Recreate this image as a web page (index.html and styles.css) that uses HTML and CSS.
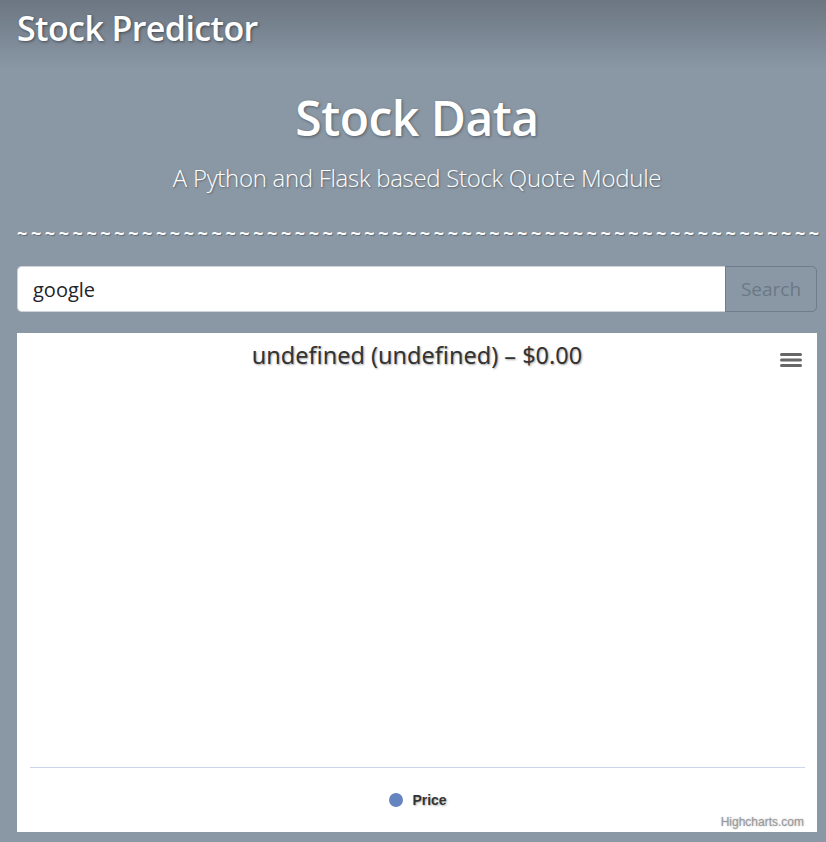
FILE: index.html
```html
<!DOCTYPE html>
<html>
<head>
<meta charset="utf-8">
<link rel="stylesheet" href="styles.css">
</head>
<body>
<div class="page">
  <header class="topbar">
    <span class="brand">Stock Predictor</span>
  </header>
  <section class="hero">
    <h1 class="hero-title">Stock Data</h1>
    <p class="hero-lead">A Python and Flask based Stock Quote Module</p>
  </section>
  <div class="tildes">~~~~~~~~~~~~~~~~~~~~~~~~~~~~~~~~~~~~~~~~~~~~~~~~~~~~~~~~~~</div>
  <form class="search">
    <input class="search-input" type="text" value="google">
    <button class="search-btn" type="button">Search</button>
  </form>
  <div class="chart">
    <div class="chart-head">
      <div class="chart-title">undefined (undefined) – $0.00</div>
      <svg class="chart-menu" width="22" height="18" viewBox="0 0 22 18">
        <rect x="0" y="2" width="22" height="3" rx="1.5" fill="#666"/>
        <rect x="0" y="7.5" width="22" height="3" rx="1.5" fill="#666"/>
        <rect x="0" y="13" width="22" height="3" rx="1.5" fill="#666"/>
      </svg>
    </div>
    <div class="chart-plot"></div>
    <div class="chart-axis"></div>
    <div class="chart-legend">
      <span class="legend-dot"></span>
      <span class="legend-label">Price</span>
    </div>
    <div class="chart-credit">Highcharts.com</div>
  </div>
</div>
</body>
</html>
```
FILE: styles.css
```css
html, body {
  margin: 0;
  padding: 0;
}
body {
  background: linear-gradient(to bottom, #6c7682 0px, #8a98a5 70px, #8a98a5 100%);
  min-height: 842px;
  font-family: "Open Sans", "Noto Sans", sans-serif;
  color: #fff;
  overflow: hidden;
}
.page {
  width: 800px;
  padding-left: 17px;
}
.topbar {
  height: 60px;
  display: flex;
  align-items: flex-start;
}
.brand {
  font-size: 34px;
  font-weight: 600;
  line-height: 1;
  margin-top: 11px;
  text-shadow: 1px 1px 3px rgba(0,0,0,0.45);
  letter-spacing: -0.6px;
}
.hero {
  text-align: center;
  padding-top: 30px;
}
.hero-title {
  margin: 0;
  font-size: 48px;
  font-weight: 600;
  line-height: 56px;
  letter-spacing: -0.5px;
  text-shadow: 1px 1px 3px rgba(0,0,0,0.4);
}
.hero-lead {
  margin: 17px 0 0;
  font-size: 24px;
  font-weight: 300;
  line-height: 30px;
  letter-spacing: -0.3px;
  text-shadow: 1px 1px 2px rgba(0,0,0,0.35);
}
.tildes {
  margin-top: 30px;
  white-space: nowrap;
  font-size: 18px;
  font-weight: 700;
  letter-spacing: 3.6px;
  line-height: 20px;
  text-shadow: 1px 1px 1px rgba(0,0,0,0.3);
}
.search {
  margin: 23px 0 0;
  display: flex;
  height: 46px;
}
.search-input {
  flex: 1;
  box-sizing: border-box;
  height: 46px;
  margin: 0;
  border: 1px solid #ced4da;
  border-right: none;
  border-radius: 5px 0 0 5px;
  padding: 0 15px;
  font-family: "Open Sans", "Noto Sans", sans-serif;
  font-size: 20px;
  color: #212529;
  background: #fff;
  outline: none;
}
.search-btn {
  width: 92px;
  height: 46px;
  box-sizing: border-box;
  margin: 0;
  border: 1px solid #6f7d8b;
  border-radius: 0 5px 5px 0;
  background: transparent;
  color: #6b7986;
  font-family: "Open Sans", "Noto Sans", sans-serif;
  font-size: 19px;
  padding: 0;
}
.chart {
  margin-top: 21px;
  height: 499px;
  background: #fff;
  display: flex;
  flex-direction: column;
  position: relative;
  color: #333;
}
.chart-head {
  height: 44px;
  position: relative;
}
.chart-title {
  text-align: center;
  font-family: "Noto Sans", "Open Sans", sans-serif;
  font-size: 23.5px;
  line-height: 26px;
  padding-top: 9px;
  color: #333;
  text-shadow: 1px 1px 2px rgba(0,0,0,0.35);
}
.chart-menu {
  position: absolute;
  right: 15px;
  top: 18px;
}
.chart-plot {
  flex: 1;
}
.chart-axis {
  height: 1px;
  background: #ccd6eb;
  margin: 0 12px 0 13px;
}
.chart-legend {
  height: 64px;
  display: flex;
  align-items: center;
  justify-content: center;
  gap: 9px;
  padding-left: 2px;
}
.legend-dot {
  width: 14px;
  height: 14px;
  border-radius: 50%;
  background: #6684bf;
}
.legend-label {
  font-family: "Liberation Sans", Arial, sans-serif;
  font-size: 14px;
  font-weight: 700;
  color: #333;
  text-shadow: 1px 1px 2px rgba(0,0,0,0.3);
}
.chart-credit {
  position: absolute;
  right: 13px;
  bottom: 3px;
  font-family: "Liberation Sans", Arial, sans-serif;
  font-size: 12px;
  color: #999;
  text-shadow: 0 0 2px rgba(0,0,0,0.3);
}
```
